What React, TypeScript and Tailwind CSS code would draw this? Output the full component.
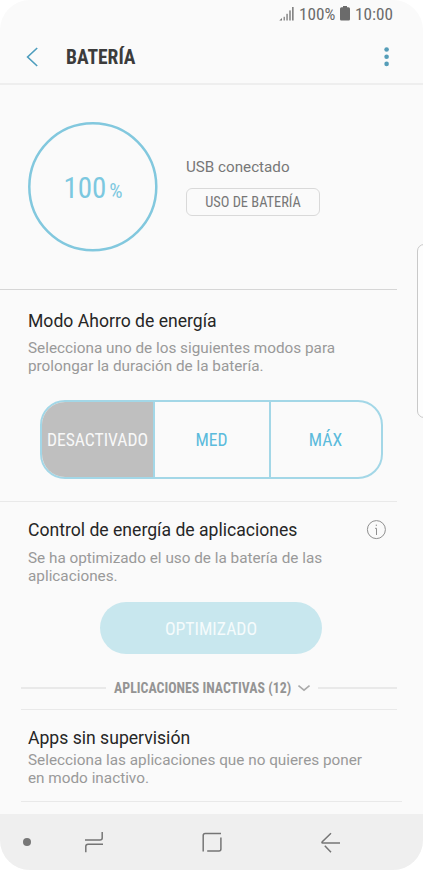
import type { ReactNode } from "react";

const CONDENSED =
  "font-['Roboto_Condensed',Roboto,sans-serif] [font-stretch:75%] whitespace-nowrap";

function SignalIcon() {
  return (
    <svg width="15" height="14" viewBox="0 0 15 14" fill="#777">
      <path d="M0.300 13.500L3 11V13.500z" />
      <rect x="4.600" y="9.800" width="1.200" height="3.700" />
      <rect x="7.400" y="6.800" width="1.300" height="6.700" />
      <rect x="10.300" y="3.400" width="1.400" height="10.100" />
      <rect x="13.100" y="0" width="1.500" height="13.500" />
    </svg>
  );
}

function StatusBar() {
  return (
    <div className={`${CONDENSED} flex h-7 items-center pb-px pl-[279px] text-[17.200px] leading-7 text-[#6b6b6b]`}>
      <SignalIcon />
      <span className="ml-[5px] w-[36px]">100%</span>
      <svg className="ml-[5px]" width="10" height="15" viewBox="0 0 10 15" fill="#6b6b6b">
        <path d="M3 0h4v1.300h1.500A1.500 1.500 0 0 1 10 2.800V13.200A1.300 1.300 0 0 1 8.700 14.500H1.300A1.300 1.300 0 0 1 0 13.200V2.800A1.500 1.500 0 0 1 1.500 1.300H3z" />
      </svg>
      <span className="ml-[5px]">10:00</span>
    </div>
  );
}

function Header() {
  return (
    <header className="flex h-[57px] items-center border-b-2 border-[#eee] pl-[26px] pr-[32px] pt-[2px]">
      <svg width="12" height="20" viewBox="0 0 12 20" fill="none" stroke="#4d9dbd" strokeWidth="1.600">
        <path d="M11.200 1L1.600 10l9.600 9" />
      </svg>
      <h1 className={`${CONDENSED} ml-[28px] flex-1 pt-[2px] text-[19.500px] font-bold text-[#3c3c3c]`}>BATERÍA</h1>
      <svg width="9" height="20" viewBox="0 0 9 20" fill="#559db8">
        <circle cx="4.600" cy="2.500" r="2.300" />
        <circle cx="4.600" cy="9.700" r="2.300" />
        <circle cx="4.600" cy="16.900" r="2.300" />
      </svg>
    </header>
  );
}

function BatteryStatus() {
  return (
    <section className="mr-[26px] flex h-[205px] border-b border-[#d6d6d6] pl-[28px] pt-[37px]">
      <div className={`${CONDENSED} relative flex size-[130px] items-baseline justify-center pt-[45px] text-[#7cc8e0]`}>
        <svg className="absolute left-0 top-0" width="130" height="130" fill="none" stroke="#82c8de">
          <circle cx="64.800" cy="64.800" r="63.500" strokeWidth="2.500" />
        </svg>
        <span className="text-[29px]">100</span>
        <span className="ml-[3px] text-[21px]">%</span>
      </div>
      <div className="ml-[28px] pt-[35px]">
        <p className="text-[15.200px] leading-5 text-[#777]">USB conectado</p>
        <button
          className={`${CONDENSED} mt-[11px] h-7 w-[134px] rounded-[6px] border border-[#d9d9d9] pt-[2px] text-[14.400px] text-[#777]`}
        >
          USO DE BATERÍA
        </button>
      </div>
    </section>
  );
}

function Title({ children }: { children: ReactNode }) {
  return <h2 className="whitespace-nowrap text-[17.600px] leading-6 text-[#262626]">{children}</h2>;
}

function Description({ children }: { children: ReactNode }) {
  return <p className="whitespace-nowrap text-[15.300px] leading-[18px] text-[#999]">{children}</p>;
}

function PowerSaving() {
  return (
    <section className="mr-[26px] h-[212px] border-b border-[#e9e9e9] pl-[28px] pt-[19px]">
      <Title>Modo Ahorro de energía</Title>
      <div className="pt-[6px]">
        <Description>
          Selecciona uno de los siguientes modos para
          <br />
          prolongar la duración de la batería.
        </Description>
      </div>
      <div
        className={`${CONDENSED} ml-[12px] mt-[25px] flex h-[79px] w-[343px] overflow-hidden rounded-[25px] border-2 border-[#a3d7e7] text-[17.600px] text-[#5bbbdc]`}
      >
        <button className="w-[111px] bg-[#bfbfbf] pt-[2px] text-[#f8f8f8]">DESACTIVADO</button>
        <button className="w-[118px] border-x-2 border-[#a3d7e7] pr-px pt-[2px]">MED</button>
        <button className="flex-1 pr-px pt-[2px]">MÁX</button>
      </div>
    </section>
  );
}

function AppControl() {
  return (
    <section className="mr-[26px] h-[207px] pl-[21px] pt-[16px]">
      <div className="flex items-center pl-[7px]">
        <div className="flex-1">
          <Title>Control de energía de aplicaciones</Title>
        </div>
        <svg className="mr-[11px]" width="20" height="20" viewBox="0 0 20 20" fill="none" stroke="#8f8f8f">
          <circle cx="10.400" cy="9.600" r="9" />
          <path d="M10.300 4.600V6M9 8.300H10.500V15" />
        </svg>
      </div>
      <div className="pl-[7px] pt-[7px]">
        <Description>
          Se ha optimizado el uso de la batería de las
          <br />
          aplicaciones.
        </Description>
      </div>
      <button
        className={`${CONDENSED} ml-[79px] mt-[17px] block h-[52px] w-[222px] rounded-full bg-[#c8e7ee] pt-[2px] text-[17.700px] text-[#f5fbfc]`}
      >
        OPTIMIZADO
      </button>
      <div className="mt-[23px] flex items-center">
        <div className="h-[2px] w-[85px] bg-[#e9e9e9]" />
        <span className={`${CONDENSED} ml-[8px] pt-px text-[13.850px] font-bold leading-5 text-[#949494]`}>
          APLICACIONES INACTIVAS (12)
        </span>
        <svg className="ml-[7px]" width="12" height="8" viewBox="0 0 12 8" fill="none" stroke="#aaa" strokeWidth="1.600">
          <path d="M0.500 1.500L6 6.200l5.500-4.700" />
        </svg>
        <div className="ml-[8px] h-[2px] flex-1 bg-[#e9e9e9]" />
      </div>
    </section>
  );
}

function UnmonitoredApps() {
  return (
    <section className="ml-[21px] h-[93px]">
      <div className="mr-[26px] border-t border-[#e9e9e9]" />
      <div className="h-[91px] pl-[7px] pt-[16px]">
        <Title>Apps sin supervisión</Title>
        <div className="pt-px">
          <Description>
            Selecciona las aplicaciones que no quieres poner
            <br />
            en modo inactivo.
          </Description>
        </div>
      </div>
      <div className="mr-[21px] border-t border-[#e9e9e9]" />
    </section>
  );
}

function NavigationBar() {
  return (
    <nav className="mt-auto flex h-[56px] items-center bg-[#efefef] pl-[23px]">
      <span className="size-[8px] rounded-full bg-[#777]" />
      <svg className="ml-[53px]" width="20" height="22" viewBox="0 0 20 22" fill="none" stroke="#757575" strokeWidth="1.500">
        <path d="M1 9H16Q18.200 9 18.200 7V1M19 13.300H4Q1.800 13.300 1.800 15.500V21.300" />
      </svg>
      <svg className="ml-[98px]" width="20" height="20" viewBox="0 0 20 20" fill="none" stroke="#757575" strokeWidth="1.500">
        <path d="M1.200 19.600V3.500Q1.200 1.500 3.200 1.500H19M18.900 5.500V17Q18.900 19 17 19H5.200" />
      </svg>
      <svg className="ml-[99px]" width="20" height="21" viewBox="0 0 20 21" fill="none" stroke="#757575" strokeWidth="1.500">
        <path d="M10 1.200L1.300 9.600Q0.500 10.900 1.500 10.900H19M3.800 13.700L10 20.300" />
      </svg>
    </nav>
  );
}

export default function App() {
  return (
    <div className="relative h-[870px] w-[423px] overflow-hidden bg-white font-[Roboto,sans-serif]">
      <div className="flex h-[870px] flex-col overflow-hidden rounded-[30px] bg-[#fafafa]">
        <StatusBar />
        <Header />
        <BatteryStatus />
        <PowerSaving />
        <AppControl />
        <UnmonitoredApps />
        <NavigationBar />
      </div>
      {/* edge panel handle */}
      <div className="absolute left-[417px] top-[244px] h-[174px] w-[12px] rounded-l-[7px] border border-[#c9c9c9] bg-[#fdfdfd]" />
    </div>
  );
}
